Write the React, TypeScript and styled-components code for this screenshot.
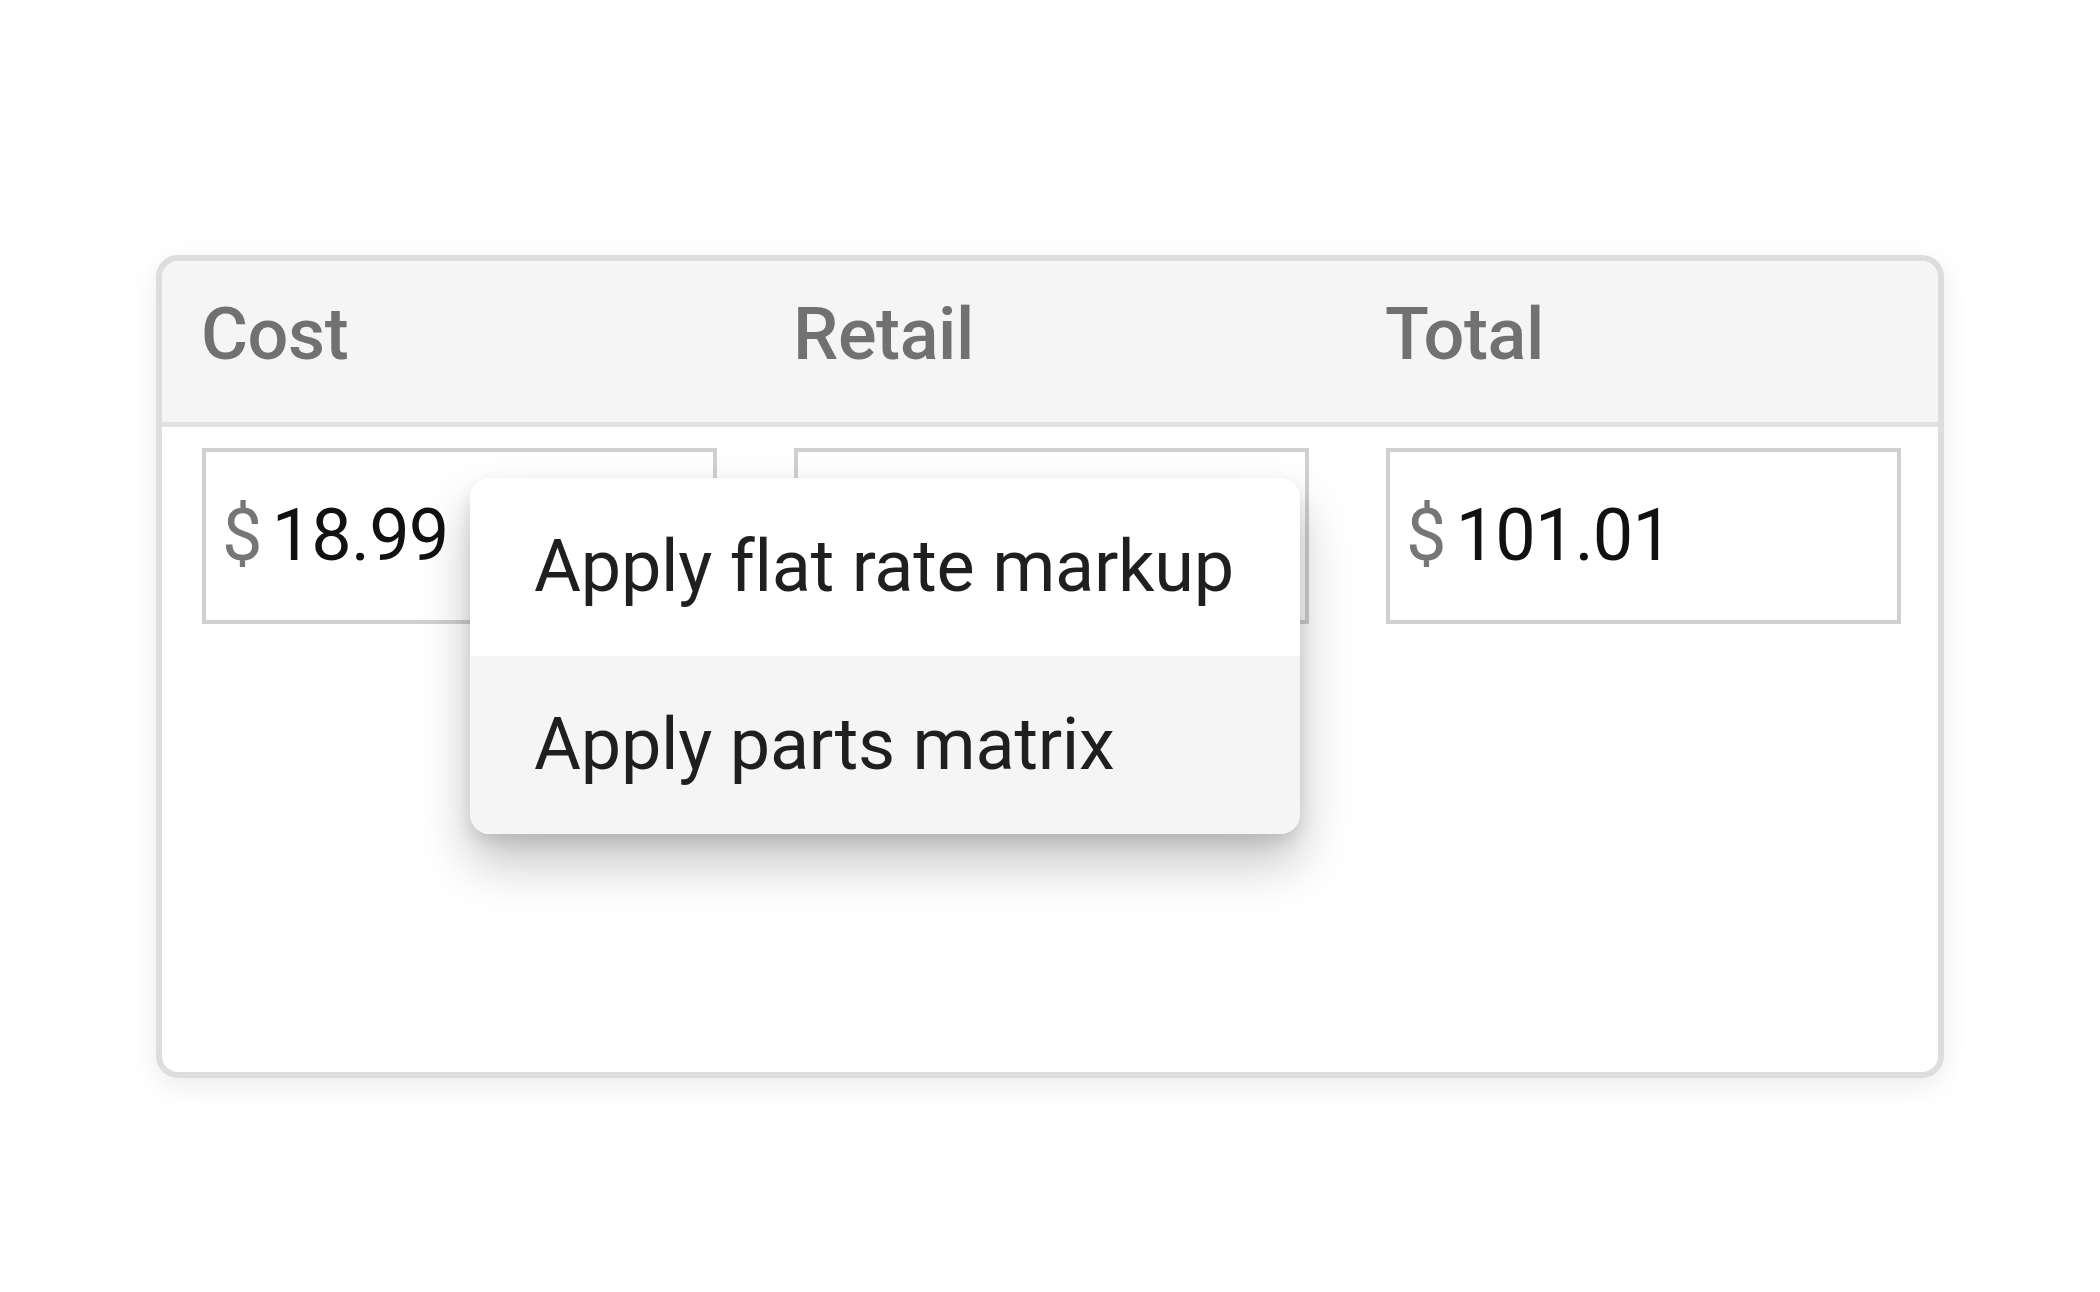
import styled, { createGlobalStyle } from "styled-components"

const GlobalStyle = createGlobalStyle`
  html, body {
    margin: 0;
    padding: 0;
    background: #ffffff;
  }
  body {
    font-family: Roboto, "Liberation Sans", Arial, sans-serif;
  }
`

interface Column {
  label: string
  value?: string
}

const columns: Column[] = [
  { label: "Cost", value: "18.99" },
  { label: "Retail" },
  { label: "Total", value: "101.01" },
]

const menuItems = ["Apply flat rate markup", "Apply parts matrix"]

function App(): JSX.Element {
  return (
    <Page>
      <GlobalStyle />
      <Card>
        <Header>
          {columns.map((col) => (
            <HeaderCell key={col.label}>{col.label}</HeaderCell>
          ))}
        </Header>
        <Body>
          {columns.map((col) => (
            <Cell key={col.label}>
              <PriceField>
                {col.value && (
                  <>
                    <Currency>$</Currency>
                    <Amount>{col.value}</Amount>
                  </>
                )}
              </PriceField>
            </Cell>
          ))}
        </Body>
        <Menu>
          {menuItems.map((item, i) => (
            <MenuItem key={item} $active={i === 1}>
              {item}
            </MenuItem>
          ))}
        </Menu>
      </Card>
    </Page>
  )
}

const Page = styled.div`
  width: 2100px;
  height: 1292px;
  padding: 255px 0 0 156px;
  box-sizing: border-box;
`

const Card = styled.div`
  position: relative;
  width: 1788px;
  height: 823px;
  box-sizing: border-box;
  border: 6px solid #dddddd;
  border-radius: 22px;
  background: #ffffff;
  box-shadow: 0 8px 28px rgba(0, 0, 0, 0.08);
`

const Header = styled.div`
  display: grid;
  grid-template-columns: repeat(3, 1fr);
  height: 166px;
  box-sizing: border-box;
  background: #f5f5f5;
  border-bottom: 5px solid #e0e0e0;
  border-radius: 16px 16px 0 0;
`

const HeaderCell = styled.div`
  padding: 31px 0 0 39px;
  font-size: 72px;
  font-weight: 500;
  line-height: 86px;
  letter-spacing: -0.4px;
  color: #717171;
`

const Body = styled.div`
  display: grid;
  grid-template-columns: repeat(3, 1fr);
  padding-top: 21px;
`

const Cell = styled.div`
  padding-left: 40px;
`

const PriceField = styled.div`
  display: flex;
  align-items: center;
  gap: 10px;
  width: 515px;
  height: 176px;
  box-sizing: border-box;
  padding-left: 16px;
  border: 4px solid #d0d0d0;
  background: #ffffff;
  font-size: 72px;
  line-height: 86px;
  letter-spacing: -0.8px;
`

const Currency = styled.span`
  color: #767676;
`

const Amount = styled.span`
  color: #111111;
`

const Menu = styled.div`
  position: absolute;
  left: 308px;
  top: 217px;
  width: 830px;
  border-radius: 20px;
  overflow: hidden;
  background: #ffffff;
  box-shadow: 0 28px 52px rgba(0, 0, 0, 0.24), 0 8px 16px rgba(0, 0, 0, 0.1);
`

const MenuItem = styled.div<{ $active?: boolean }>`
  display: flex;
  align-items: center;
  height: 178px;
  padding-left: 64px;
  font-size: 72px;
  line-height: 86px;
  letter-spacing: -0.25px;
  color: #1f1f1f;
  background: ${(p) => (p.$active ? "#f5f5f5" : "#ffffff")};
`

export default App
